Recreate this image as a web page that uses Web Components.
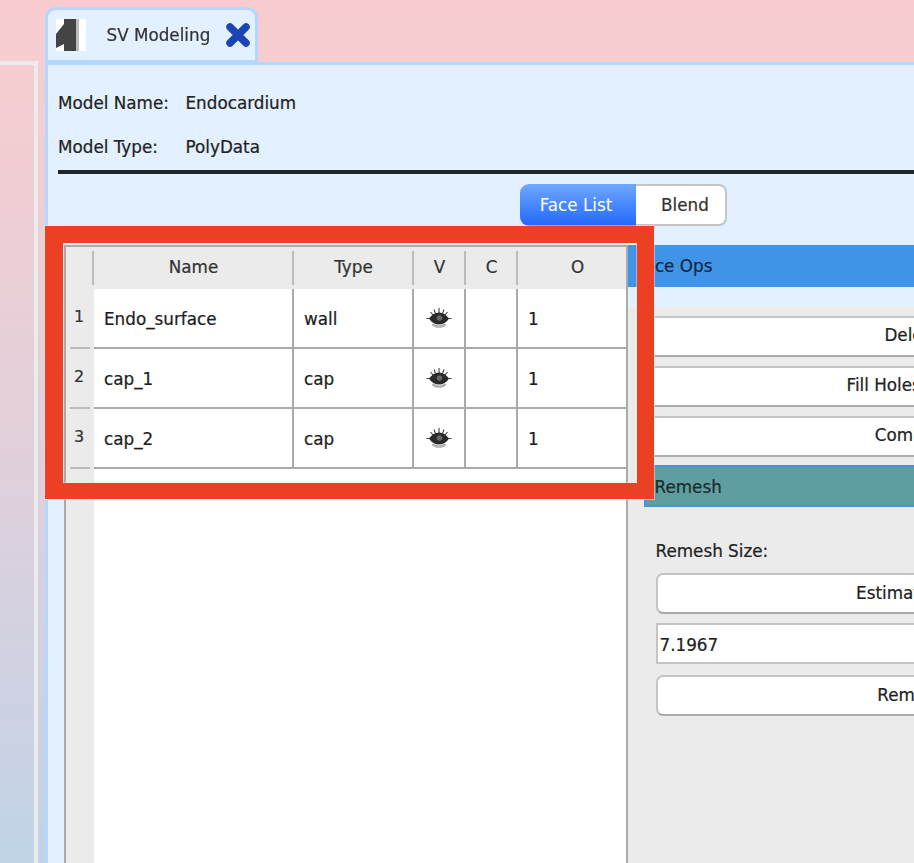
<!DOCTYPE html>
<html><head><meta charset="utf-8"><title>SV Modeling</title>
<style>
html,body{margin:0;padding:0;height:863px;overflow:hidden;background:linear-gradient(180deg,#f8cccf 0%,#f4cdd1 12%,#dfd0dc 56%,#c0d3e7 100%);}
body{font:16.8px/1.2 "DejaVu Sans","Liberation Sans",sans-serif;color:#222;-webkit-text-stroke:.22px currentColor;}
</style></head><body>
<template id="t-app"><style>
:host{display:flex;height:863px;width:1300px;overflow:hidden;position:relative;filter:blur(.45px)}
.side{flex:none;width:34px;margin-top:61px;border-top:4px solid #ebebeb;border-right:4px solid #ebebeb}
.main{flex:none;margin-left:7px;width:1240px;display:flex;flex-direction:column}
</style><div class="side"></div><div class="main"><slot name="tab"></slot><slot></slot></div><slot name="over"></slot></template>

<template id="t-tab"><style>
:host{display:flex;align-items:center;box-sizing:border-box;width:213px;height:58px;margin-top:7px;background:#e3f0ff;border:3.5px solid #b3d7ff;border-bottom-width:5px;border-radius:11px 11px 0 0;padding:0 0 0 7.5px;color:#333;position:relative;z-index:1;flex:none}
svg{display:block;flex:none}
.lbl{margin-left:21px;width:119px;white-space:nowrap;font-size:16.8px}
</style><svg width="30" height="32" viewBox="0 0 30 32"><rect width="30" height="32" fill="#fff"/><polygon points="0,15 8,5 8,25 0,29" fill="#444"/><rect x="8" width="12" height="32" fill="#444"/><rect x="20" width="3" height="32" fill="#bbb"/></svg><span class="lbl"><slot></slot></span><svg width="24" height="24" viewBox="0 0 24 24"><path d="M4 4 20 20M20 4 4 20" stroke="#1a45b5" stroke-width="7.5" stroke-linecap="round"/></svg></template>

<template id="t-panel"><style>
:host{display:flex;flex-direction:column;flex:1;min-height:0;margin-top:-3px;background:#e3f0ff;border-left:3.5px solid #b3d7ff;border-top:3px solid #b3d7ff;box-sizing:border-box}
</style><slot></slot></template>

<template id="t-info"><style>
:host{display:block;padding:16px 0 0 9.5px}
.r{display:flex;height:44px;align-items:center;color:#222}
.l{width:128px;white-space:nowrap;padding-left:.5px;margin-right:-.5px}
hr{border:0;height:4px;background:#212529;margin:1px 0 0 0}
</style><div class="r"><span class="l">Model Name:</span><span id="n"></span></div><div class="r"><span class="l">Model Type:</span><span id="t"></span></div><hr></template>

<template id="t-seg"><style>
:host{display:flex;margin:10px 0 0 471.5px;height:42px;flex:none}
.a,.b{box-sizing:border-box;display:flex;align-items:center;justify-content:center;height:42px}
.a{width:116px;border-radius:9px 0 0 9px;color:#fff;background:linear-gradient(180deg,#6fa8fb,#2268fe);padding-right:3px;-webkit-text-stroke:0}
.b{width:91px;border:2px solid #c4c4c4;border-left:0;border-radius:0 8px 8px 0;background:#fff;color:#333;padding-left:10px}
</style><div class="a"><slot name="a"></slot></div><div class="b"><slot name="b"></slot></div></template>

<template id="t-split"><style>
:host{display:flex;flex:1;min-height:0;margin:19px 0 0 15.5px;align-items:stretch}
</style><slot></slot></template>

<template id="t-table"><style>
:host{display:flex;flex-direction:column;flex:none;width:564px;box-sizing:border-box;border:2px solid #aaa;border-bottom:0;background:linear-gradient(90deg,#ebebeb 28px,#fff 28px)}
</style><slot></slot></template>

<template id="t-head"><style>
:host{display:grid;grid-template-columns:28px 200px 120px 52px 52px 108px;height:42px;background:#ebebeb;align-items:center;color:#333}
div{height:34px;line-height:32px;text-align:center;border-right:2px solid #bcbcbc;box-sizing:border-box;padding-left:2px}
div:last-child{border-right:0;padding-left:12px}
</style><div></div><div>Name</div><div>Type</div><div>V</div><div>C</div><div>O</div></template>

<template id="t-row"><style>
:host{display:grid;grid-template-columns:28px 200px 120px 52px 52px 108px;height:60px;color:#1c1c1c}
.h{display:flex;flex-direction:column;background:#ebebeb;color:#333}
.h b{flex:1;font-weight:400;font-size:16px;display:flex;align-items:center;justify-content:center;padding-bottom:3px;padding-right:1px}
.h i{display:block;height:2px;margin:0 4px;background:#bcbcbc}
.c{border-right:2px solid #aaa;border-bottom:2px solid #aaa;box-sizing:border-box;display:flex;align-items:center;padding:2px 0 0 10.500px;white-space:nowrap}
.e{justify-content:center;padding:2px 0 0 1px}
.l{border-right:0}
svg{display:block}
</style><div class="h"><b id="i"></b><i></i></div><div class="c" id="n"></div><div class="c" id="t"></div><div class="c e"><svg width="28" height="22" viewBox="0 0 28 22"><path d="M14 0V5M9 1.500 10.500 5.500M19 1.500 17.500 5.500M5.500 4 8 7M22.500 4 20 7M1.500 10.500H5M26.500 10.500H23" stroke="#444" stroke-width="1.100" fill="none"/><path d="M4 10.500C7 6.500 10 4.500 14 4.500S21 6.500 24 10.500C21.500 14.500 18 16.500 14 16.500S6.500 14.500 4 10.500Z" fill="#2a2a2a"/><circle cx="14.500" cy="10" r="2.800" fill="#666"/><path d="M7.500 16C10 19.500 18 19.500 20.500 16" stroke="#b0b0b0" stroke-width="2.400" fill="none"/></svg></div><div class="c"></div><div class="c l" id="o"></div></template>

<template id="t-ops"><style>
:host{display:block;flex:none;width:620px;margin-top:0}
.sec{height:42px;display:flex;align-items:center;padding:1px 0 0 9px;box-sizing:border-box;background:#4094e8;color:#16263c}
.gap{height:20px}
.body{background:#ebebeb;height:600px;padding:9px 0 0 16px}
</style><div class="sec"><slot name="title"></slot></div><div class="gap"></div><div class="body"><slot></slot></div></template>

<template id="t-btn"><style>
:host{display:flex;box-sizing:border-box;height:41px;margin-bottom:9px;background:#fff;border:2px solid #c4c4c4;border-bottom-color:#aaa;border-radius:7px;align-items:center;justify-content:center;color:#222;white-space:nowrap;width:var(--w,537px);padding-bottom:var(--pb,2px)}
</style><slot></slot></template>

<template id="t-remesh"><style>
:host{display:block;margin-left:0}
.bar{box-sizing:border-box;height:42px;display:flex;align-items:center;padding:2px 0 0 9px;background:#5f9ea0;border:2px solid #4094e8;border-right:0;color:#1c2b2c;margin-top:-1px}
.b{padding:0 0 0 12px}
.lab{margin:34px 0 12px;height:20px;line-height:20px;color:#222}
.inp{box-sizing:border-box;height:41px;border:2px solid #c4c4c4;background:#fff;display:flex;align-items:center;padding:3px 0 0 2px;margin-bottom:11px;width:520px;color:#222}
.est{--w:515px;--pb:0px}.go{--w:511px;--pb:0px}
</style><div class="bar"><slot name="title"></slot></div><div class="b"><div class="lab"><slot name="label"></slot></div><div class="est"><slot name="est"></slot></div><div class="inp"><slot name="value"></slot></div><div class="go"><slot name="go"></slot></div></div></template>

<template id="t-over"><style>
:host{position:absolute;left:45px;top:226px;width:609px;height:273px;box-sizing:border-box;border:solid #ec4024;border-width:17px 17px 16px 18px;box-shadow:0 0 0 1px rgba(255,225,215,.5),inset 0 0 0 1px rgba(255,225,215,.5);pointer-events:none}
</style></template>

<sv-app>
 <sv-tab slot="tab">SV Modeling</sv-tab>
 <sv-panel>
  <sv-info name="Endocardium" type="PolyData"></sv-info>
  <sv-seg><span slot="a">Face List</span><span slot="b">Blend</span></sv-seg>
  <sv-split>
   <sv-table>
    <sv-head></sv-head>
    <sv-row i="1" n="Endo_surface" t="wall" o="1"></sv-row>
    <sv-row i="2" n="cap_1" t="cap" o="1"></sv-row>
    <sv-row i="3" n="cap_2" t="cap" o="1"></sv-row>
   </sv-table>
   <sv-ops>
    <span slot="title">Face Ops</span>
    <sv-btn>Delete</sv-btn>
    <sv-btn>Fill Holes w/ IDs</sv-btn>
    <sv-btn>Combine</sv-btn>
    <sv-remesh>
     <span slot="title">Remesh</span>
     <span slot="label">Remesh Size:</span>
     <sv-btn slot="est">Estimate Size</sv-btn>
     <span slot="value">7.1967</span>
     <sv-btn slot="go">Remesh</sv-btn>
    </sv-remesh>
   </sv-ops>
  </sv-split>
 </sv-panel>
 <sv-over slot="over"></sv-over>
</sv-app>
<script>
function def(tag,tid,init){customElements.define(tag,class extends HTMLElement{constructor(){super();const r=this.attachShadow({mode:"open"});r.appendChild(document.getElementById(tid).content.cloneNode(true));}connectedCallback(){if(init)init.call(this,this.shadowRoot);}});}
def("sv-app","t-app");def("sv-tab","t-tab");def("sv-panel","t-panel");
def("sv-info","t-info",function(r){r.getElementById("n").textContent=this.getAttribute("name");r.getElementById("t").textContent=this.getAttribute("type");});
def("sv-seg","t-seg");def("sv-split","t-split");def("sv-table","t-table");def("sv-head","t-head");
def("sv-row","t-row",function(r){for(const k of ["i","n","t","o"])r.getElementById(k).textContent=this.getAttribute(k);});
def("sv-ops","t-ops");def("sv-btn","t-btn");def("sv-remesh","t-remesh");def("sv-over","t-over");
</script>
</body></html>
